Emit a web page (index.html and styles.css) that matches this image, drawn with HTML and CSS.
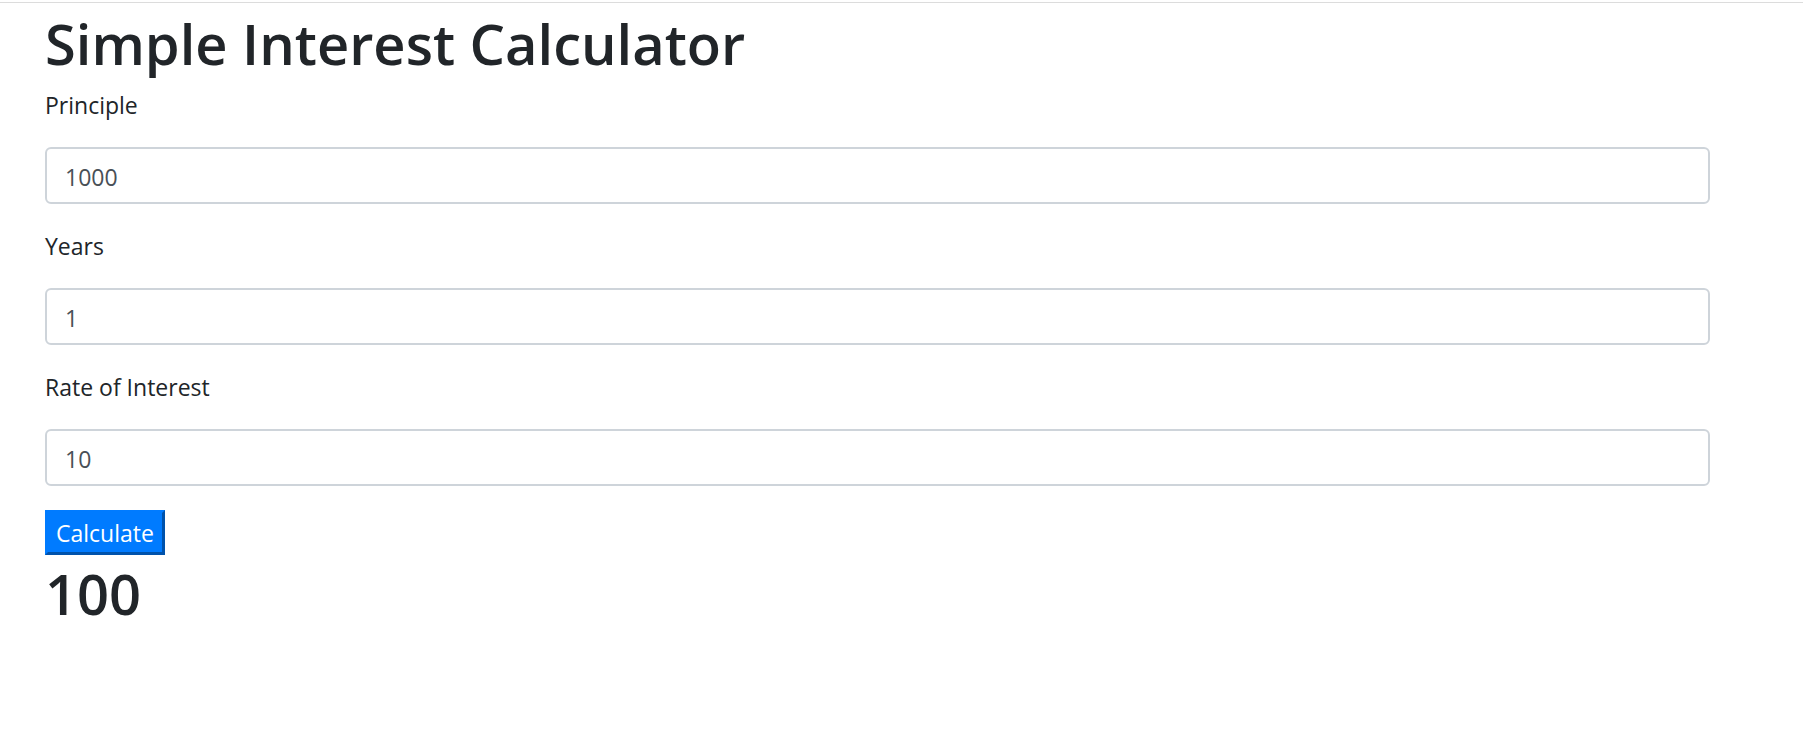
FILE: index.html
```html
<!DOCTYPE html>
<html lang="en">
<head>
<meta charset="utf-8">
<meta name="viewport" content="width=device-width, initial-scale=1">
<title>Simple Interest Calculator</title>
<link rel="stylesheet" href="styles.css">
</head>
<body>
<main class="page">
  <h1 class="title">Simple Interest Calculator</h1>
  <form class="form">
    <div class="field">
      <label class="label" for="principle">Principle</label>
      <input class="input" id="principle" type="text" value="1000">
    </div>
    <div class="field">
      <label class="label" for="years">Years</label>
      <input class="input" id="years" type="text" value="1">
    </div>
    <div class="field">
      <label class="label" for="rate">Rate of Interest</label>
      <input class="input" id="rate" type="text" value="10">
    </div>
    <button class="button" type="button">Calculate</button>
  </form>
  <h1 class="title">100</h1>
</main>
</body>
</html>
```

FILE: styles.css
```css
* {
  box-sizing: border-box;
}

body {
  margin: 0;
  padding-top: 2px;
  background: #fff;
  color: #212529;
  font-family: "Segoe UI", "Open Sans", "Noto Sans", sans-serif;
  font-size: 23px;
  line-height: 36px;
}

.page {
  border-top: 1px solid #dcdcdc;
  padding: 4px 93px 0 45px;
}

.title {
  margin: 0 0 8px;
  font-size: 56px;
  font-weight: 600;
  line-height: 72px;
}

.form {
  display: flex;
  flex-direction: column;
  align-items: flex-start;
  gap: 24px;
  margin-bottom: 2px;
}

.field {
  width: 100%;
}

.label {
  display: block;
  margin-bottom: 24px;
}

.input {
  display: block;
  width: 100%;
  height: 57px;
  padding: 10px 18px 8px;
  border: 2px solid #ced4da;
  border-radius: 6px;
  background: #fff;
  color: #495057;
  font: inherit;
}

.button {
  padding: 2px 8px 1px;
  border: 3px outset #007bff;
  background: #007bff;
  color: #fff;
  font: inherit;
}
```
